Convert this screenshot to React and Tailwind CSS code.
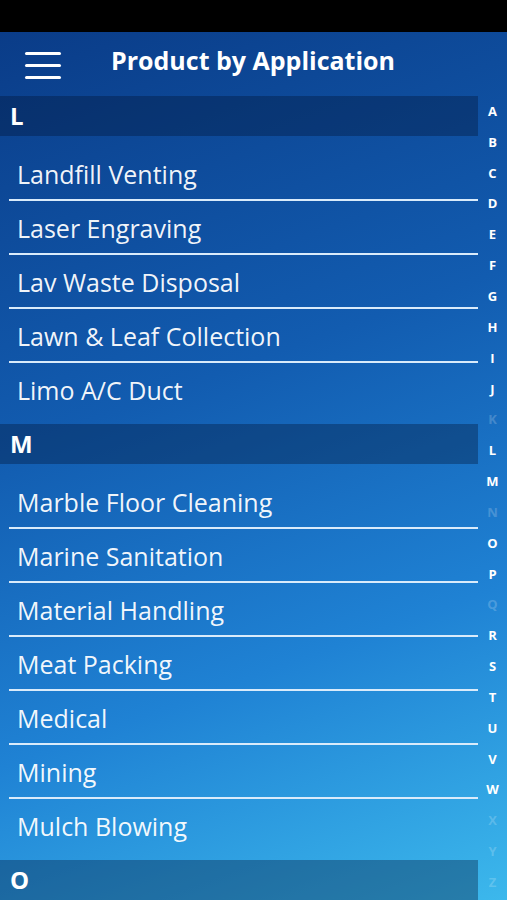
import { Fragment } from "react";

const SECTIONS = [
  {
    letter: "L",
    items: [
      "Landfill Venting",
      "Laser Engraving",
      "Lav Waste Disposal",
      "Lawn & Leaf Collection",
      "Limo A/C Duct",
    ],
  },
  {
    letter: "M",
    items: [
      "Marble Floor Cleaning",
      "Marine Sanitation",
      "Material Handling",
      "Meat Packing",
      "Medical",
      "Mining",
      "Mulch Blowing",
    ],
  },
  { letter: "O", items: [] },
];

const LETTERS = "ABCDEFGHIJKLMNOPQRSTUVWXYZ".split("");
const DISABLED = ["K", "N", "Q", "X", "Y", "Z"];

function SectionHeader({ letter }) {
  return (
    <div className="h-10 w-[478px] bg-[#001230]/35 flex items-center pl-[10px]">
      <span className="text-[24px] font-bold text-white leading-none">{letter}</span>
    </div>
  );
}

function Row({ label, last }) {
  return (
    <div className="h-[54px] flex flex-col">
      <div className="flex-1 flex items-center pl-[17px] pt-[2px]">
        <span className="text-[25px] text-white/95 leading-none">{label}</span>
      </div>
      {!last && <div className="h-[2px] ml-[9px] w-[469px] bg-[#d9ebfb]" />}
      {last && <div className="h-[2px]" />}
    </div>
  );
}

export default function App() {
  return (
    <div
      className="w-[507px] h-[900px] overflow-hidden flex flex-col bg-black"
      style={{ fontFamily: '"Open Sans", "Noto Sans", sans-serif' }}
    >
      <div className="h-8 bg-black shrink-0" />
      <div className="relative flex-1 bg-[linear-gradient(160deg,#0a3c88_0%,#125cb0_40%,#1f82d4_70%,#3cb8ec_100%)] overflow-hidden">
        <div className="h-16 flex items-center">
          <div className="w-[111px] pl-[25px]">
            <div className="flex flex-col gap-[9px] pt-[2px]">
              <div className="w-9 h-[3px] rounded-full bg-white" />
              <div className="w-9 h-[3px] rounded-full bg-white" />
              <div className="w-9 h-[3px] rounded-full bg-white" />
            </div>
          </div>
          <h1 className="text-[25px] font-bold text-white leading-none pb-[7px]">Product by Application</h1>
        </div>

        <div className="flex">
          <div className="w-[478px]">
            {SECTIONS.map((s) => (
              <Fragment key={s.letter}>
                <SectionHeader letter={s.letter} />
                {s.items.length > 0 && (
                  <div className="pt-[11px] pb-[7px]">
                    {s.items.map((item, i) => (
                      <Row key={item} label={item} last={i === s.items.length - 1} />
                    ))}
                  </div>
                )}
              </Fragment>
            ))}
          </div>
          <div className="flex-1 flex flex-col items-center pt-[0px]">
            {LETTERS.map((l) => (
              <div
                key={l}
                className={`h-[30.85px] flex items-center justify-center text-[13px] font-bold leading-none ${
                  DISABLED.includes(l) ? "text-white/20" : "text-white"
                }`}
              >
                {l}
              </div>
            ))}
          </div>
        </div>
      </div>
    </div>
  );
}
